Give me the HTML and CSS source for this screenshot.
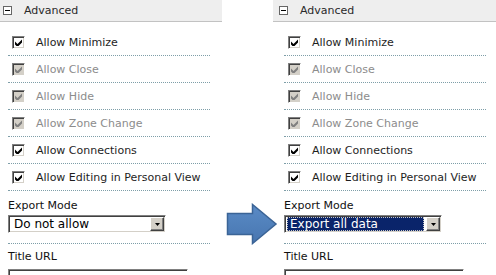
FILE: index.html
```html
<!DOCTYPE html>
<html lang="en">

<head>
  <meta charset="UTF-8">
  <title>Advanced</title>
  <link rel="stylesheet" href="styles.css">
</head>

<body>
  <div class="page">
    <div class="panel first">
      <div class="panel-head"><span class="toggle"></span>Advanced</div>
      <div class="panel-body">
        <div class="row"><span class="cb"><svg viewBox="0 0 7 7"><path d="M0 2.5l2.5 2.5 4.5-4.5v3l-4.5 4.5-2.5-2.5z" /></svg></span>Allow Minimize</div>
        <div class="row off"><span class="cb"><svg viewBox="0 0 7 7"><path d="M0 2.5l2.5 2.5 4.5-4.5v3l-4.5 4.5-2.5-2.5z" /></svg></span>Allow Close</div>
        <div class="row off"><span class="cb"><svg viewBox="0 0 7 7"><path d="M0 2.5l2.5 2.5 4.5-4.5v3l-4.5 4.5-2.5-2.5z" /></svg></span>Allow Hide</div>
        <div class="row off"><span class="cb"><svg viewBox="0 0 7 7"><path d="M0 2.5l2.5 2.5 4.5-4.5v3l-4.5 4.5-2.5-2.5z" /></svg></span>Allow Zone Change</div>
        <div class="row"><span class="cb"><svg viewBox="0 0 7 7"><path d="M0 2.5l2.5 2.5 4.5-4.5v3l-4.5 4.5-2.5-2.5z" /></svg></span>Allow Connections</div>
        <div class="row"><span class="cb"><svg viewBox="0 0 7 7"><path d="M0 2.5l2.5 2.5 4.5-4.5v3l-4.5 4.5-2.5-2.5z" /></svg></span>Allow Editing in Personal View</div>
        <div class="field">
          <div class="label">Export Mode</div>
          <div class="select">
            <span class="value">Do not allow</span>
            <span class="drop"><svg viewBox="0 0 5 3"><path d="M0 0h5l-2.5 3z" /></svg></span>
          </div>
        </div>
        <div class="field last">
          <div class="label">Title URL</div>
          <div class="textbox"></div>
        </div>
      </div>
    </div>

    <div class="arrow">
      <svg viewBox="0 0 52 42" width="52" height="42">
        <defs>
          <linearGradient id="fill" x1="0" y1="0" x2="0" y2="1">
            <stop offset="0" stop-color="#5a8bc6" />
            <stop offset="1" stop-color="#4876b0" />
          </linearGradient>
        </defs>
        <path d="M1.5 10.5h25v-9l23.5 19.5-23.5 19.5v-9h-25z" fill="url(#fill)" stroke="#3b6496" stroke-width="1.5" />
      </svg>
    </div>

    <div class="panel">
      <div class="panel-head"><span class="toggle"></span>Advanced</div>
      <div class="panel-body">
        <div class="row"><span class="cb"><svg viewBox="0 0 7 7"><path d="M0 2.5l2.5 2.5 4.5-4.5v3l-4.5 4.5-2.5-2.5z" /></svg></span>Allow Minimize</div>
        <div class="row off"><span class="cb"><svg viewBox="0 0 7 7"><path d="M0 2.5l2.5 2.5 4.5-4.5v3l-4.5 4.5-2.5-2.5z" /></svg></span>Allow Close</div>
        <div class="row off"><span class="cb"><svg viewBox="0 0 7 7"><path d="M0 2.5l2.5 2.5 4.5-4.5v3l-4.5 4.5-2.5-2.5z" /></svg></span>Allow Hide</div>
        <div class="row off"><span class="cb"><svg viewBox="0 0 7 7"><path d="M0 2.5l2.5 2.5 4.5-4.5v3l-4.5 4.5-2.5-2.5z" /></svg></span>Allow Zone Change</div>
        <div class="row"><span class="cb"><svg viewBox="0 0 7 7"><path d="M0 2.5l2.5 2.5 4.5-4.5v3l-4.5 4.5-2.5-2.5z" /></svg></span>Allow Connections</div>
        <div class="row"><span class="cb"><svg viewBox="0 0 7 7"><path d="M0 2.5l2.5 2.5 4.5-4.5v3l-4.5 4.5-2.5-2.5z" /></svg></span>Allow Editing in Personal View</div>
        <div class="field">
          <div class="label">Export Mode</div>
          <div class="select">
            <span class="value picked">Export all data</span>
            <span class="drop"><svg viewBox="0 0 5 3"><path d="M0 0h5l-2.5 3z" /></svg></span>
          </div>
        </div>
        <div class="field last">
          <div class="label">Title URL</div>
          <div class="textbox"></div>
        </div>
      </div>
    </div>
  </div>
</body>

</html>
```

FILE: styles.css
```css
body {
  margin: 0;
  padding: 0;
  background-color: #fff;
  color: #1e1e1e;
  font-family: Verdana, 'DejaVu Sans', sans-serif;
  font-size: 11px;
  overflow: hidden;
}

.page {
  display: flex;
  align-items: flex-start;
  width: 496px;
  height: 275px;
  overflow: hidden;
}

.panel {
  flex: none;
  width: 225px;
}

.panel.first {
  margin-left: -3px;
}

.panel-head {
  display: flex;
  align-items: center;
  height: 21px;
  background-color: #eeeeee;
  border-bottom: 1px solid #c2c2c2;
  color: #2a2a2a;
}

.toggle {
  position: relative;
  width: 7px;
  height: 7px;
  margin: 0 12px 0 6px;
  border: 1px solid #666;
  background-color: #fff;
}

.toggle::after {
  content: "";
  position: absolute;
  left: 1px;
  top: 3px;
  width: 5px;
  height: 1px;
  background-color: #000;
}

.panel-body {
  padding: 8px 12px 0 11px;
}

.row {
  display: flex;
  align-items: center;
  height: 26px;
  border-bottom: 1px dotted #7e9ea8;
}

.row:first-child {
  height: 25px;
}

.cb {
  display: flex;
  align-items: center;
  justify-content: center;
  width: 11px;
  height: 11px;
  margin: 0 11px 0 4px;
  border: 1px solid;
  border-color: #808080 #fff #fff #808080;
  box-shadow: inset 1px 1px #404040, inset -1px -1px #d4d0c8;
  background-color: #fff;
}

.cb svg {
  width: 7px;
  height: 7px;
  fill: #000;
}

.row.off {
  color: #8c8c8c;
}

.row.off .cb {
  background-color: #d4d0c8;
}

.row.off .cb svg {
  fill: #808080;
}

.field {
  padding-top: 7px;
  padding-bottom: 10px;
  border-bottom: 1px dotted #7e9ea8;
}

.field.last {
  padding-top: 5px;
  border-bottom: none;
}

.label {
  height: 16px;
  line-height: 16px;
  color: #111;
}

.select {
  display: flex;
  align-items: center;
  width: 154px;
  height: 14px;
  margin-top: 1px;
  padding: 1px;
  border: 1px solid;
  border-color: #808080 #fff #fff #808080;
  box-shadow: inset 1px 1px #404040, inset -1px -1px #d4d0c8;
  background-color: #fff;
}

.value {
  flex: 1;
  height: 12px;
  margin-left: 1px;
  padding-left: 2px;
  line-height: 12px;
  border: 1px dotted transparent;
  font-size: 12px;
  color: #000;
}

.value.picked {
  background-color: #0a246a;
  color: #fff;
  border-color: #c8c8c8;
}

.drop {
  display: flex;
  align-items: center;
  justify-content: center;
  width: 12px;
  height: 12px;
  margin-left: 2px;
  border: 1px solid;
  border-color: #fff #404040 #404040 #fff;
  box-shadow: inset -1px -1px #808080;
  background-color: #d4d0c8;
}

.drop svg {
  width: 5px;
  height: 3px;
  fill: #000;
}

.textbox {
  width: 178px;
  height: 18px;
  margin-top: 4px;
  border: 1px solid;
  border-color: #808080 #fff #fff #808080;
  box-shadow: inset 1px 1px #404040;
  background-color: #fff;
}

.arrow {
  flex: none;
  width: 47px;
  margin-top: 203px;
  margin-left: 4px;
}

.arrow svg {
  display: block;
}
```
